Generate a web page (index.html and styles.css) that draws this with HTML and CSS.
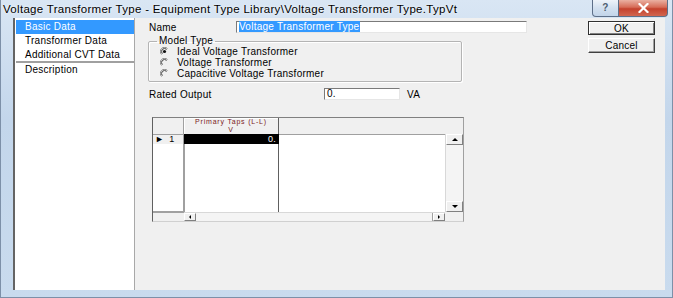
FILE: index.html
```html
<!DOCTYPE html>
<html lang="en">
<head>
    <meta charset="UTF-8">
    <title>Voltage Transformer Type</title>
    <link rel="stylesheet" href="styles.css">
</head>
<body>

    <div class="window">
        <!-- barra de titulo -->
        <div class="titlebar">
            <span class="title">Voltage Transformer Type - Equipment Type Library\Voltage Transformer Type.TypVt</span>
            <div class="caption-buttons">
                <span class="cap-btn help-btn"><span class="help-glyph">?</span></span>
                <span class="cap-btn close-btn">
                    <svg width="11" height="10" viewBox="0 0 11 10">
                        <path d="M1.5 1 L9.5 9 M9.5 1 L1.5 9" stroke="#fff" stroke-width="2.2" stroke-linecap="square"/>
                    </svg>
                </span>
            </div>
        </div>

        <div class="frame">
            <div class="client">

                <ul class="page-list">
                    <li class="selected">Basic Data</li>
                    <li>Transformer Data</li>
                    <li class="sep">Additional CVT Data</li>
                    <li>Description</li>
                </ul>

                <div class="page">
                    <div class="fields">

                        <div class="row">
                            <span class="lbl name-lbl">Name</span>
                            <div class="textbox name-box"><span class="sel">Voltage Transformer Type</span></div>
                        </div>

                        <fieldset class="groupbox">
                            <legend>Model Type</legend>
                            <div class="radio">
                                <svg width="9" height="9" viewBox="0 0 9 9">
                                    <path d="M7.5 1.5 A4 4 0 0 0 1.5 7.5" fill="none" stroke="#8a8a8a"/>
                                    <path d="M6.6 2.4 A2.9 2.9 0 0 0 2.4 6.6" fill="none" stroke="#3c3c3c"/>
                                    <circle cx="4.5" cy="4.5" r="1.6" fill="#111"/>
                                </svg>
                                <span>Ideal Voltage Transformer</span>
                            </div>
                            <div class="radio">
                                <svg width="9" height="9" viewBox="0 0 9 9">
                                    <path d="M7.5 1.5 A4 4 0 0 0 1.5 7.5" fill="none" stroke="#8a8a8a"/>
                                    <path d="M6.6 2.4 A2.9 2.9 0 0 0 2.4 6.6" fill="none" stroke="#3c3c3c"/>
                                </svg>
                                <span>Voltage Transformer</span>
                            </div>
                            <div class="radio">
                                <svg width="9" height="9" viewBox="0 0 9 9">
                                    <path d="M7.5 1.5 A4 4 0 0 0 1.5 7.5" fill="none" stroke="#8a8a8a"/>
                                    <path d="M6.6 2.4 A2.9 2.9 0 0 0 2.4 6.6" fill="none" stroke="#3c3c3c"/>
                                </svg>
                                <span>Capacitive Voltage Transformer</span>
                            </div>
                        </fieldset>

                        <div class="row rated-row">
                            <span class="lbl rated-lbl">Rated Output</span>
                            <div class="textbox rated-box">0.</div>
                            <span class="unit">VA</span>
                        </div>

                        <!-- tabla de tomas -->
                        <div class="grid">
                            <div class="corner"></div>
                            <div class="col-head"><span>Primary Taps (L-L)</span><span>V</span></div>
                            <div class="head-rest"></div>

                            <div class="row-head"><span class="arrow">&#9658;</span> 1</div>
                            <div class="cell active">0.</div>
                            <div class="cell rest first"></div>

                            <div class="vscroll">
                                <span class="sbtn"><span class="tri up"></span></span>
                                <span class="track"></span>
                                <span class="sbtn"><span class="tri down"></span></span>
                            </div>

                            <div class="row-head empty"></div>
                            <div class="cell col-body"></div>
                            <div class="cell rest"></div>

                            <div class="foot-corner"></div>
                            <div class="hscroll">
                                <span class="sbtn h"><span class="tri left"></span></span>
                                <span class="track"></span>
                                <span class="sbtn h"><span class="tri right"></span></span>
                            </div>
                            <div class="foot-end"></div>
                        </div>

                    </div>

                    <div class="buttons">
                        <button type="button" class="dlg-btn ok-btn">OK</button>
                        <button type="button" class="dlg-btn">Cancel</button>
                    </div>
                </div>

            </div>
        </div>
    </div>

</body>
</html>
```

FILE: styles.css
```css
/* --- General --- */
body {
    margin: 0;
    font-family: "Liberation Sans", Arial, sans-serif;
    font-size: 10px;
    letter-spacing: 0.25px;
    color: #000;
    background: #fff;
}

/* --- Ventana --- */
.window {
    width: 673px;
    height: 298px;
    display: flex;
    flex-direction: column;
    background: linear-gradient(to bottom, #d9e6f4, #c3d6eb 40%, #c9dbee);
    box-shadow: inset 1px 0 0 #7d90a8, inset -1px 0 0 #7d90a8, inset 0 -1px 0 #7d90a8;
    overflow: hidden;
}

.titlebar {
    height: 18px;
    display: flex;
    align-items: flex-start;
}
.title {
    font-size: 11.5px;
    line-height: 14px;
    padding: 2px 0 0 3px;
    letter-spacing: 0.3px;
    white-space: nowrap;
    text-shadow: 0 0 3px #fff;
}

.caption-buttons { margin-left: auto; margin-right: 5px; display: flex; }
.cap-btn {
    height: 16px;
    display: flex;
    align-items: center;
    justify-content: center;
    border: 1px solid #5d6f88;
    border-top: none;
}
.help-btn {
    width: 25px;
    border-radius: 0 0 0 4px;
    background: linear-gradient(to bottom, #eef3f9, #d3e0ef 50%, #c2d4e9);
}
.help-glyph { font-size: 10px; font-weight: bold; color: #4e5d70; line-height: 10px; }
.close-btn {
    width: 48px;
    border-left: none;
    border-radius: 0 0 4px 0;
    background: linear-gradient(to bottom, #eab0a2, #d66c57 45%, #c4412d 55%, #d26650);
}

.frame {
    flex: 1;
    display: flex;
    padding: 0 8px 8px 13px;
}
.client {
    flex: 1;
    display: flex;
    background: #f0f0f0;
}

/* --- Lista de paginas --- */
.page-list {
    width: 118px;
    margin: 0;
    padding: 2px 0 0 1px;
    list-style: none;
    background: #fff;
    border-left: 2px solid #646464;
    border-right: 1px solid #a8a8a8;
}
.page-list li {
    height: 14px;
    line-height: 14px;
    padding-left: 9px;
    white-space: nowrap;
}
.page-list .selected { background: #3399ff; color: #fff; }
.page-list .sep { border-bottom: 2px solid #a0a0a0; height: 13px; }

/* --- Contenido --- */
.page { flex: 1; display: flex; }
.fields { width: 439px; padding: 3px 0 0 14px; }

.row { display: flex; align-items: center; height: 12px; }
.name-lbl { width: 87px; }
.rated-lbl { width: 175px; }

.textbox {
    height: 10px;
    line-height: 10px;
    padding-left: 2px;
    background: #fff;
    border: 1px solid;
    border-color: #7a7a7a #e6e6e6 #e6e6e6 #7a7a7a;
    white-space: nowrap;
}
.name-box { width: 287px; }
.sel { background: #3399ff; color: #fff; padding-right: 1px; }
.rated-row { margin-top: 6px; }
.rated-box { width: 72px; }
.unit { margin-left: 7px; }

.groupbox {
    margin: 3px 0 0 -1px;
    width: 301px;
    padding: 0 0 2px 11px;
    border: 1px solid #b4b4b4;
    border-radius: 2px;
    box-shadow: 1px 1px 0 #fff, inset 1px 1px 0 #fff;
}
.groupbox legend {
    padding: 0 2px;
    margin-left: -3px;
    line-height: 10px;
}
.radio { display: flex; align-items: center; height: 11px; }
.radio svg { margin-right: 8px; }

/* --- Tabla --- */
.grid {
    margin: 17px 0 0 3px;
    width: 310px;
    height: 103px;
    border: 1px solid;
    border-color: #808080 #a0a0a0 #d0d0d0 #606060;
    display: grid;
    grid-template-columns: 31px 95px 1fr 18px;
    grid-template-rows: 16px 10px 1fr 9px;
    background: #f0f0f0;
    font-size: 9px;
}
.corner { border-right: 1px solid #a0a0a0; }
.col-head {
    display: flex;
    flex-direction: column;
    align-items: center;
    font-size: 7px;
    line-height: 8px;
    letter-spacing: 0.8px;
    color: #7b1a24;
    border-right: 1px solid #606060;
    box-shadow: inset 1px 1px 0 #fff;
}
.head-rest { grid-column: 3 / 5; }

.row-head {
    display: flex;
    align-items: center;
    gap: 5px;
    padding-left: 2px;
    border-right: 1px solid #a0a0a0;
    border-top: 1px solid #a0a0a0;
    line-height: 9px;
}
.arrow { font-size: 9px; }
.row-head.empty { background: #fff; border-top: none; border-bottom: 1px solid #a0a0a0; }

.cell { background: #fff; }
.cell.active {
    background: #000;
    color: #fff;
    text-align: right;
    padding-right: 3px;
    line-height: 10px;
}
.cell.first { border-top: 1px solid #a0a0a0; }
.col-body { border-right: 1px solid #606060; border-left: 1px solid #a0a0a0; }

.vscroll {
    grid-column: 4;
    grid-row: 2 / 4;
    display: flex;
    flex-direction: column;
    background: #f4f4f4;
    border-left: 1px solid #d8d8d8;
}
.vscroll .track { flex: 1; }
.sbtn {
    height: 9px;
    display: flex;
    align-items: center;
    justify-content: center;
    background: #f0f0f0;
    border: 1px solid;
    border-color: #fff #808080 #808080 #fff;
}
.tri { width: 0; height: 0; border: 3px solid transparent; }
.tri.up { border-bottom-color: #000; border-top-width: 0; }
.tri.down { border-top-color: #000; border-bottom-width: 0; }
.tri.left { border-right-color: #000; border-left-width: 0; border-width: 2px 2px 2px 0; }
.tri.right { border-left-color: #000; border-right-width: 0; border-width: 2px 0 2px 2px; }

.foot-corner { border-top: 1px solid #a0a0a0; }
.hscroll {
    grid-column: 2 / 4;
    display: flex;
    background: #f4f4f4;
    border-top: 1px solid #d8d8d8;
}
.hscroll .track { flex: 1; border-right: 1px solid #a0a0a0; }
.sbtn.h { height: auto; width: 10px; }

/* --- Botones --- */
.buttons {
    width: 67px;
    padding-top: 3px;
    display: flex;
    flex-direction: column;
    gap: 3px;
}
.dlg-btn {
    height: 15px;
    padding: 0;
    font-family: "Liberation Sans", Arial, sans-serif;
    font-size: 10px;
    letter-spacing: 0.25px;
    background: #f0f0f0;
    border: 1px solid;
    border-color: #fff #404040 #404040 #fff;
    box-shadow: inset -1px -1px 0 #a0a0a0;
}
.ok-btn { border-color: #303030; box-shadow: inset 1px 1px 0 #fff, inset -1px -1px 0 #808080; height: 14px; }
```
